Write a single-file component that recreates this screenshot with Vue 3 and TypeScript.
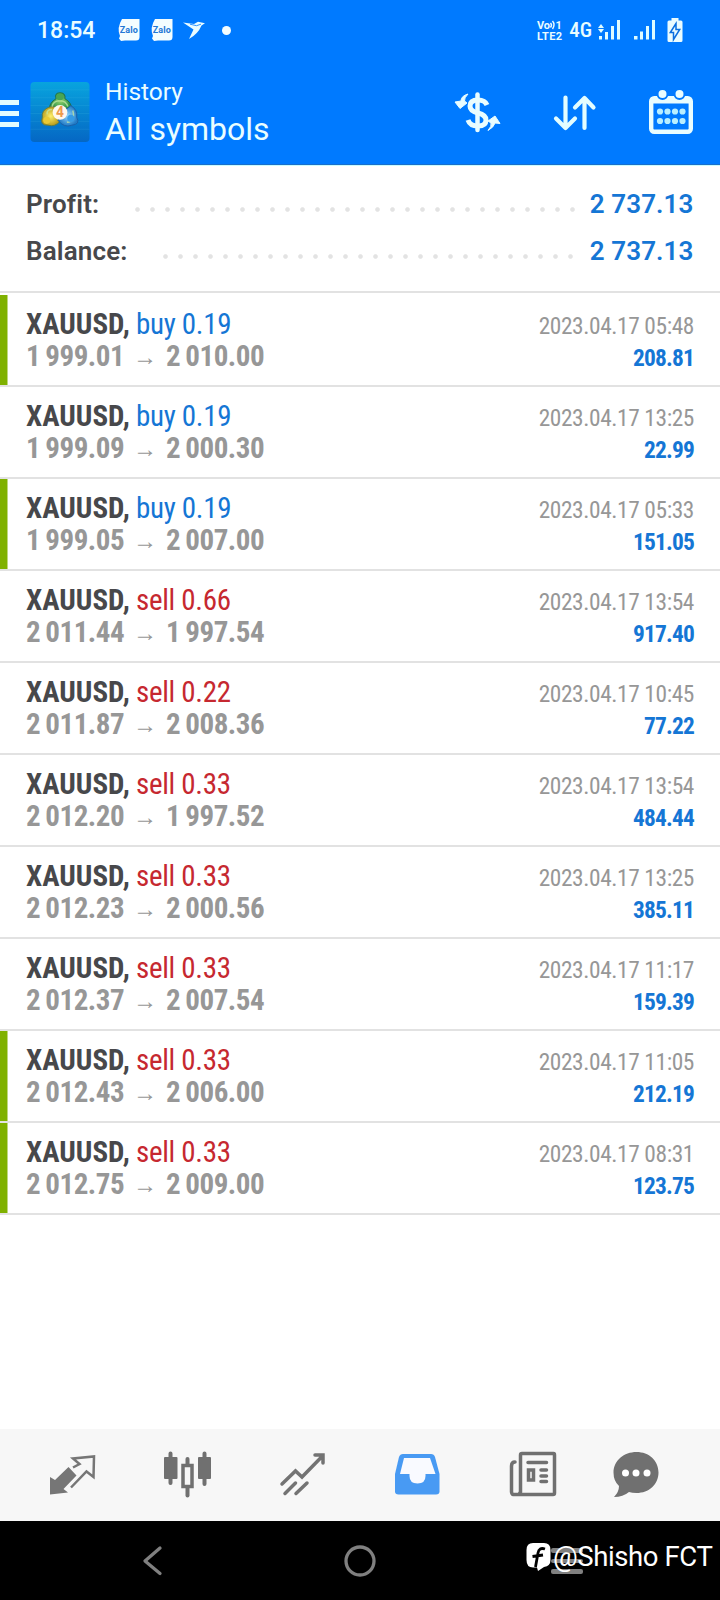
<script setup lang="ts">
interface Deal {
  side: 'buy' | 'sell'
  volume: string
  open: string
  close: string
  time: string
  profit: string
  marked?: boolean
}

const deals: Deal[] = [
  { side: 'buy', volume: '0.19', open: '1 999.01', close: '2 010.00', time: '2023.04.17 05:48', profit: '208.81', marked: true },
  { side: 'buy', volume: '0.19', open: '1 999.09', close: '2 000.30', time: '2023.04.17 13:25', profit: '22.99' },
  { side: 'buy', volume: '0.19', open: '1 999.05', close: '2 007.00', time: '2023.04.17 05:33', profit: '151.05', marked: true },
  { side: 'sell', volume: '0.66', open: '2 011.44', close: '1 997.54', time: '2023.04.17 13:54', profit: '917.40' },
  { side: 'sell', volume: '0.22', open: '2 011.87', close: '2 008.36', time: '2023.04.17 10:45', profit: '77.22' },
  { side: 'sell', volume: '0.33', open: '2 012.20', close: '1 997.52', time: '2023.04.17 13:54', profit: '484.44' },
  { side: 'sell', volume: '0.33', open: '2 012.23', close: '2 000.56', time: '2023.04.17 13:25', profit: '385.11' },
  { side: 'sell', volume: '0.33', open: '2 012.37', close: '2 007.54', time: '2023.04.17 11:17', profit: '159.39' },
  { side: 'sell', volume: '0.33', open: '2 012.43', close: '2 006.00', time: '2023.04.17 11:05', profit: '212.19', marked: true },
  { side: 'sell', volume: '0.33', open: '2 012.75', close: '2 009.00', time: '2023.04.17 08:31', profit: '123.75', marked: true },
]
</script>

<template>
  <div class="screen">
    <header class="top">
      <div class="status">
        <span class="clock">18:54</span>
        <div class="notifications">
          <svg v-for="n in 2" :key="n" width="22" height="22" viewBox="0 0 22 22">
            <path d="M4 0H21.5V18Q21.5 21.5 18 21.5H7L3 22L1 19.5L2 17Q-1.5 9 4 0Z" fill="#f4fdff" />
            <text x="1.8" y="13.8" class="zalo" textLength="18">Zalo</text>
          </svg>
          <svg class="bird" width="22" height="19" viewBox="0 0 22 19">
            <path d="M0 1.5L11 3L15 .8L22 2.2L18.5 4.5Q15 13 6 18L10.500 8.5Z" fill="#eafcff" />
            <path d="M7 3.200L13.5 4.7L18 3.2" stroke="#007aff" stroke-width=".8" fill="none" />
          </svg>
          <i class="dot"></i>
        </div>
        <div class="signals">
          <svg width="25" height="21" viewBox="0 0 25 21">
            <text x="0" y="8.500" class="volte" textLength="13">Vo</text>
            <path d="M13.5 3Q15.5 5 13.5 7.500M15.5 1Q18.5 4.500 15.5 9" stroke="#eafcff" stroke-width="1.4" fill="none" />
            <text x="18.500" y="8.5" class="volte">1</text>
            <text x="0" y="20" class="volte" textLength="25">LTE2</text>
          </svg>
          <span class="net">4G</span>
          <svg width="23" height="20" viewBox="0 0 23 20" fill="#dffcff">
            <path d="M3 4L6 8H0ZM3 13L0 9H6ZM1 16H4V19.500H1ZM7 12H10V19.500H7ZM13 6H16V19.500H13ZM19 0H22V19.500H19Z" />
          </svg>
          <svg class="sim2" width="22" height="20" viewBox="0 0 22 20" fill="#dffcff">
            <path d="M0 16H3.500V19.500H0ZM6 11.500H9V19.500H6ZM12 6H15V19.500H12ZM18 0H21V19.500H18Z" />
          </svg>
          <svg width="16" height="25" viewBox="0 0 16 25">
            <path d="M4.500 0H11.500V2.500H14Q15.500 2.500 15.500 4V22.500Q15.500 24 14 24H2Q.5 24 .5 22.500V4Q.5 2.500 2 2.500H4.500Z" fill="#eafcff" />
            <path d="M9 5.500L3.300 14.500H6.500V21.500L12.700 11.500H9Z" fill="#eafcff" stroke="#0a6fe0" stroke-width="1.500" />
          </svg>
        </div>
      </div>

      <div class="appbar">
        <div class="menu"><i></i><i></i><i></i></div>
        <svg class="logo" width="60" height="60" viewBox="0 0 60 61">
          <defs>
            <linearGradient id="sea" x1="0" y1="0" x2="0" y2="1">
              <stop offset="0" stop-color="#08a4de" />
              <stop offset="1" stop-color="#0567c4" />
            </linearGradient>
            <radialGradient id="green"><stop offset="0" stop-color="#8fd06b" /><stop offset="1" stop-color="#248f48" /></radialGradient>
            <radialGradient id="gold"><stop offset="0" stop-color="#fff06c" /><stop offset="1" stop-color="#b79c1d" /></radialGradient>
            <radialGradient id="azure"><stop offset="0" stop-color="#91d6ff" /><stop offset="1" stop-color="#207ac5" /></radialGradient>
          </defs>
          <rect width="60" height="61" rx="4" fill="url(#sea)" />
          <path d="M0 8H60M0 16H60M0 24H60M0 32H60M0 40H60M0 48H60" stroke="#55c9ec" stroke-opacity=".14" />
          <path d="M30 11Q36 11 35 17Q42 21 42 28H19Q19 21 26 17Q24 11 30 11Z" fill="url(#green)" stroke="#236d48" />
          <path d="M18 26Q24 23 30 29V40Q25 46 18 44Q9 44 12 36Q11 29 18 26Z" fill="url(#gold)" stroke="#5f7c43" />
          <path d="M41 24Q48 28 47 36Q51 43 42 44Q34 47 28 39L32 31Z" fill="url(#azure)" stroke="#1c60a8" />
          <path d="M22 25Q23 19 30 19Q36 19 38 25M17 33Q16 28 22 28M37 41Q46 40 43 29" fill="none" stroke="#c6eaa3" stroke-width="1.500" stroke-opacity=".75" />
          <ellipse cx="30" cy="15" rx="3.800" ry="3.500" fill="#49a553" />
          <circle cx="16.500" cy="39" r="3.600" fill="#e9ca34" />
          <circle cx="41" cy="37" r="3.600" fill="#369be5" />
          <circle cx="30" cy="31" r="7.500" fill="#fff8ed" />
          <text x="26" y="36" class="four">4</text>
        </svg>
        <div class="titles">
          <span class="small">History</span>
          <span class="big">All symbols</span>
        </div>
        <div class="actions">
          <svg width="46" height="40" viewBox="0 0 46 40" fill="none" stroke="#e9fdff">
            <path d="M32 12Q30 7 23 7Q15 7 15 13Q15 18 23 20Q31 22 31 27Q31 33 23 33Q15 33 13 27" stroke-width="5" />
            <path d="M22.500 1.500V37" stroke-width="4.500" stroke-linecap="round" />
            <path d="M13 1Q6 3 6 8L0 9L5 15.500L12 10L9.500 8Q9 5 13 1Z" fill="#e9fdff" stroke="#e9fdff" stroke-linejoin="round" />
            <path d="M33 37.500Q39 34 40 30L45 30.500L40 23L33 28L36 30Q37 33 33 37.500Z" fill="#e9fdff" stroke="#e9fdff" stroke-linejoin="round" />
          </svg>
          <svg width="42" height="36" viewBox="0 0 42 36" fill="none" stroke="#e3fdff" stroke-width="4.200" stroke-linecap="round" stroke-linejoin="round">
            <path d="M11.500 2.500V32.500M2 23.500L11.500 33L21 23.500M30.500 33V3M21 12.500L30.500 3L39.500 12.500" />
          </svg>
          <svg width="44" height="46" viewBox="0 0 44 46">
            <rect x="2.200" y="8.200" width="39.600" height="33.600" rx="3" fill="none" stroke="#e9fdff" stroke-width="4.400" />
            <path d="M3 7H41V13.500H3Z" fill="#e9fdff" />
            <g fill="#e9fdff" stroke="#007aff" stroke-width="2"><circle cx="13.500" cy="4" r="5" /><circle cx="30.500" cy="4" r="5" /></g>
            <g fill="#b9efff">
              <circle v-for="n in 8" :key="n" :cx="11 + ((n - 1) % 4) * 7.5" :cy="n > 4 ? 31 : 21.5" r="3.100" />
            </g>
          </svg>
        </div>
      </div>
    </header>

    <section class="summary">
      <div class="line"><span class="label profit">Profit:</span><i class="leader"></i><span class="sum">2 737.13</span></div>
      <div class="line"><span class="label balance">Balance:</span><i class="leader"></i><span class="sum">2 737.13</span></div>
    </section>

    <main class="deals">
      <article v-for="(d, i) in deals" :key="i" class="deal" :class="{ marked: d.marked }">
        <div class="left">
          <div class="row"><span class="symbol">XAUUSD,</span><span class="action" :class="d.side">{{ d.side }} {{ d.volume }}</span></div>
          <div class="row prices"><span class="open">{{ d.open }}</span><span class="arrow">→</span><span>{{ d.close }}</span></div>
        </div>
        <div class="right">
          <div class="time">{{ d.time }}</div>
          <div class="result">{{ d.profit }}</div>
        </div>
      </article>
    </main>

    <nav class="tabs">
      <svg viewBox="0 0 48 48">
        <path d="M2 27V44.500L20 42.500L15.500 39L28.500 25.500L20.500 17L7 30Z" fill="#767676" />
        <path d="M25 17.500L31.500 14L25 8.500L46 6.500L45.500 27L38.500 21.500L23 37.500" fill="none" stroke="#767676" stroke-width="2.500" />
      </svg>
      <svg viewBox="0 0 48 48">
        <path d="M7.500 3.500V33M41.500 3.500V34" stroke="#707070" stroke-width="4" stroke-linecap="round" />
        <path d="M24.500 9V45.500" stroke="#707070" stroke-width="4" stroke-linecap="round" />
        <rect x="1" y="7" width="13.500" height="22" rx="1" fill="#707070" />
        <rect x="35" y="7" width="13" height="22" rx="1" fill="#707070" />
        <rect x="20" y="15.500" width="9" height="21" fill="#f7f7f7" stroke="#707070" stroke-width="3.500" />
      </svg>
      <svg viewBox="0 0 48 48" fill="none" stroke="#737373" stroke-width="3.500" stroke-linecap="round">
        <path d="M3 34L16.500 21L23 27L43.500 6M36 5H44V13M6 43.500L16.500 33M17 43.500L28 33" />
      </svg>
      <svg viewBox="0 0 48 48">
        <path d="M10 4H38Q41 4 42 7L46.500 24V41.500Q46.500 44.500 43 44.500H5.500Q2 44.500 2 41.500V24L6 7Q7 4 10 4Z" fill="#489af3" />
        <path d="M11 8H37L42.500 24H32.500V26Q32.500 33.500 24.500 33.500Q16.500 33.500 16.500 26V24H7Z" fill="#f9faff" />
      </svg>
      <svg viewBox="0 0 48 48" fill="none" stroke="#707070">
        <path d="M11 44.500H5Q4 44.500 3.500 42V16Q3.500 12 7 12M14 3.500H45.500Q46.500 3.500 46.500 5V43Q46.500 44.500 45 44.500H11L12.500 42V5Q12.500 3.500 14 3.500" stroke-width="3.500" stroke-linecap="round" stroke-linejoin="round" />
        <path d="M20 12.500H38.500M33 20H38.500M33 26H38.500M33 31.500H38.500" stroke-width="3.500" stroke-linecap="round" />
        <path d="M20.500 20H25.500V30H20.500Z" stroke-width="3.500" />
      </svg>
      <svg viewBox="0 0 48 48">
        <path d="M24.500 2C37 2 46.500 10.500 46.500 22.500S37 43 24.500 43Q20 43 17 42Q11 47 2 47Q7 42 7 36Q1.500 31 1.500 22.500C1.500 10.500 12 2 24.500 2Z" fill="#707070" />
        <g fill="#fff"><circle cx="13.500" cy="23" r="3.500" /><circle cx="24" cy="23" r="3.500" /><circle cx="35" cy="23" r="3.500" /></g>
      </svg>
    </nav>

    <footer class="system">
      <svg class="back" width="20" height="30" viewBox="0 0 20 30" fill="none" stroke="#808080" stroke-width="3.300" stroke-linecap="round" stroke-linejoin="round"><path d="M17 2L2 15L17 27.500" /></svg>
      <svg class="home" width="32" height="32" viewBox="0 0 32 32" fill="none" stroke="#808080" stroke-width="3.300"><circle cx="16" cy="16" r="14" /></svg>
      <div class="recents"><i></i><i></i><i></i></div>
      <div class="watermark">
        <svg width="25" height="28" viewBox="0 0 25 28">
          <path d="M7 0H18Q24.500 0 24.500 7V17Q24.500 23 18 24L12 28L11 24.500H7Q.5 24.500 .5 17V7Q.5 0 7 0Z" fill="#fff" />
          <path d="M19 6Q13 4 12 10L9.500 24M6.500 13.500L17 12" fill="none" stroke="#000" stroke-width="2.800" />
        </svg>
        <span>@Shisho FCT</span>
      </div>
    </footer>
  </div>
</template>

<style>
body { margin: 0; background: #fff; }
</style>

<style scoped>
.screen {
  width: 720px;
  height: 1600px;
  display: flex;
  flex-direction: column;
  background: #fff;
  font-family: Roboto, "Liberation Sans", sans-serif;
  overflow: hidden;
}
svg { display: block; flex: none; overflow: visible; }
i { display: block; font-style: normal; }

.top { height: 165px; box-sizing: border-box; background: #007aff; border-bottom: 1px solid #1a6fc9; color: #e9fdff; }
.status { height: 60px; display: flex; align-items: center; padding: 0 37px; }
.clock { font-size: 23px; font-weight: 500; line-height: 60px; width: 80.500px; padding-top: 1px; }
.notifications { display: flex; align-items: center; gap: 11px; }
.zalo { font: bold 9px Roboto, sans-serif; fill: #2277d5; }
.bird { margin: 1px 0 0 -1px; }
.dot { width: 9px; height: 9px; border-radius: 50%; background: #f4fdff; margin-left: 6px; }
.signals { margin-left: auto; display: flex; align-items: center; }
.volte { font: bold 11px Roboto, sans-serif; fill: #eafcff; }
.net { font-size: 21px; font-stretch: 75%; font-weight: 500; margin: 0 6px 0 7px; }
.sim2 { margin: 0 11px 0 13px; }

.appbar { height: 104px; display: flex; }
.menu { width: 19px; display: flex; flex-direction: column; gap: 6px; padding-top: 40px; margin-right: 11px; }
.menu i { height: 5px; background: #e0fcff; }
.logo { margin-top: 22px; }
.four { font: bold 14px Roboto, sans-serif; fill: #ee9a4b; }
.titles { display: flex; flex-direction: column; padding: 17px 0 0 15px; }
.small { font-size: 24.500px; line-height: 30px; }
.big { font-size: 32px; line-height: 45px; white-space: nowrap; }
.actions { margin-left: auto; display: flex; align-items: flex-start; padding: 30px 27.500px 0 0; }
.actions svg:nth-child(1) { margin: 3px 52.500px 0 0; }
.actions svg:nth-child(2) { margin: 5px 53px 0 0; }

.summary { height: 128px; box-sizing: border-box; border-top: 1px solid #c9fbff; border-bottom: 2px solid #e2e2e2; padding: 15px 26.500px 0 26px; font-size: 26px; line-height: 47px; }
.line { display: flex; height: 47px; align-items: center; }
.label { color: #47484b; font-weight: 600; letter-spacing: .15px; flex: none; }
.profit { width: 104px; }
.balance { width: 132px; }
.leader { height: 15px; margin-top: 10px; background: radial-gradient(circle at center, #e3e3e3 1.800px, transparent 2.800px) 0 0 / 15px 15px repeat-x; }
.profit + .leader { width: 450px; }
.balance + .leader { width: 420px; }
.sum { margin-left: auto; color: #1576d5; font-weight: 600; letter-spacing: .1px; white-space: nowrap; }

.deals { flex: 1; padding-top: 2px; font-stretch: 75%; }
.deal { height: 92px; box-sizing: border-box; border-bottom: 2px solid #e2e2e2; padding: 13px 26px 0 26px; display: flex; justify-content: space-between; }
.deal.marked { background: linear-gradient(#7fb100, #7fb100) 0 0 / 7.500px 100% no-repeat; background-clip: padding-box; }
.row { display: flex; font-size: 29px; line-height: 32px; white-space: nowrap; }
.symbol { width: 110px; font-weight: 700; color: #47484b; }
.action { letter-spacing: -.3px; }
.buy { color: #1576d5; }
.sell { color: #c62830; }
.prices { font-weight: 700; color: #979797; letter-spacing: -.45px; word-spacing: -1.200px; }
.open { width: 107px; }
.arrow { width: 33px; font: bold 24px/33px "Liberation Sans", sans-serif; height: 32px; }
.right { padding-top: 2px; text-align: right; font-size: 23.400px; line-height: 32px; white-space: nowrap; }
.time { color: #979797; letter-spacing: -.4px; }
.result { color: #1576d5; font-weight: 700; letter-spacing: -.8px; }

.tabs { height: 92px; box-sizing: border-box; background: #f7f7f7; display: grid; grid-template-columns: 115px 116px 114px 115px 104px 48px; padding: 21px 0 0 48px; }
.tabs svg { width: 48px; height: 48px; }

.system { height: 79px; background: #000; display: flex; align-items: center; position: relative; }
.back { margin-left: 143px; }
.home { margin-left: 181px; }
.recents { width: 32px; margin-left: 175px; display: flex; flex-direction: column; gap: 6px; padding-top: 1px; }
.recents i { height: 4.500px; border-radius: 2px; background: #808080; }
.watermark { position: absolute; left: 526px; top: 22px; display: flex; color: #fff; font: 27.500px/28px Roboto, sans-serif; letter-spacing: -.4px; white-space: nowrap; gap: 2px; }
</style>
